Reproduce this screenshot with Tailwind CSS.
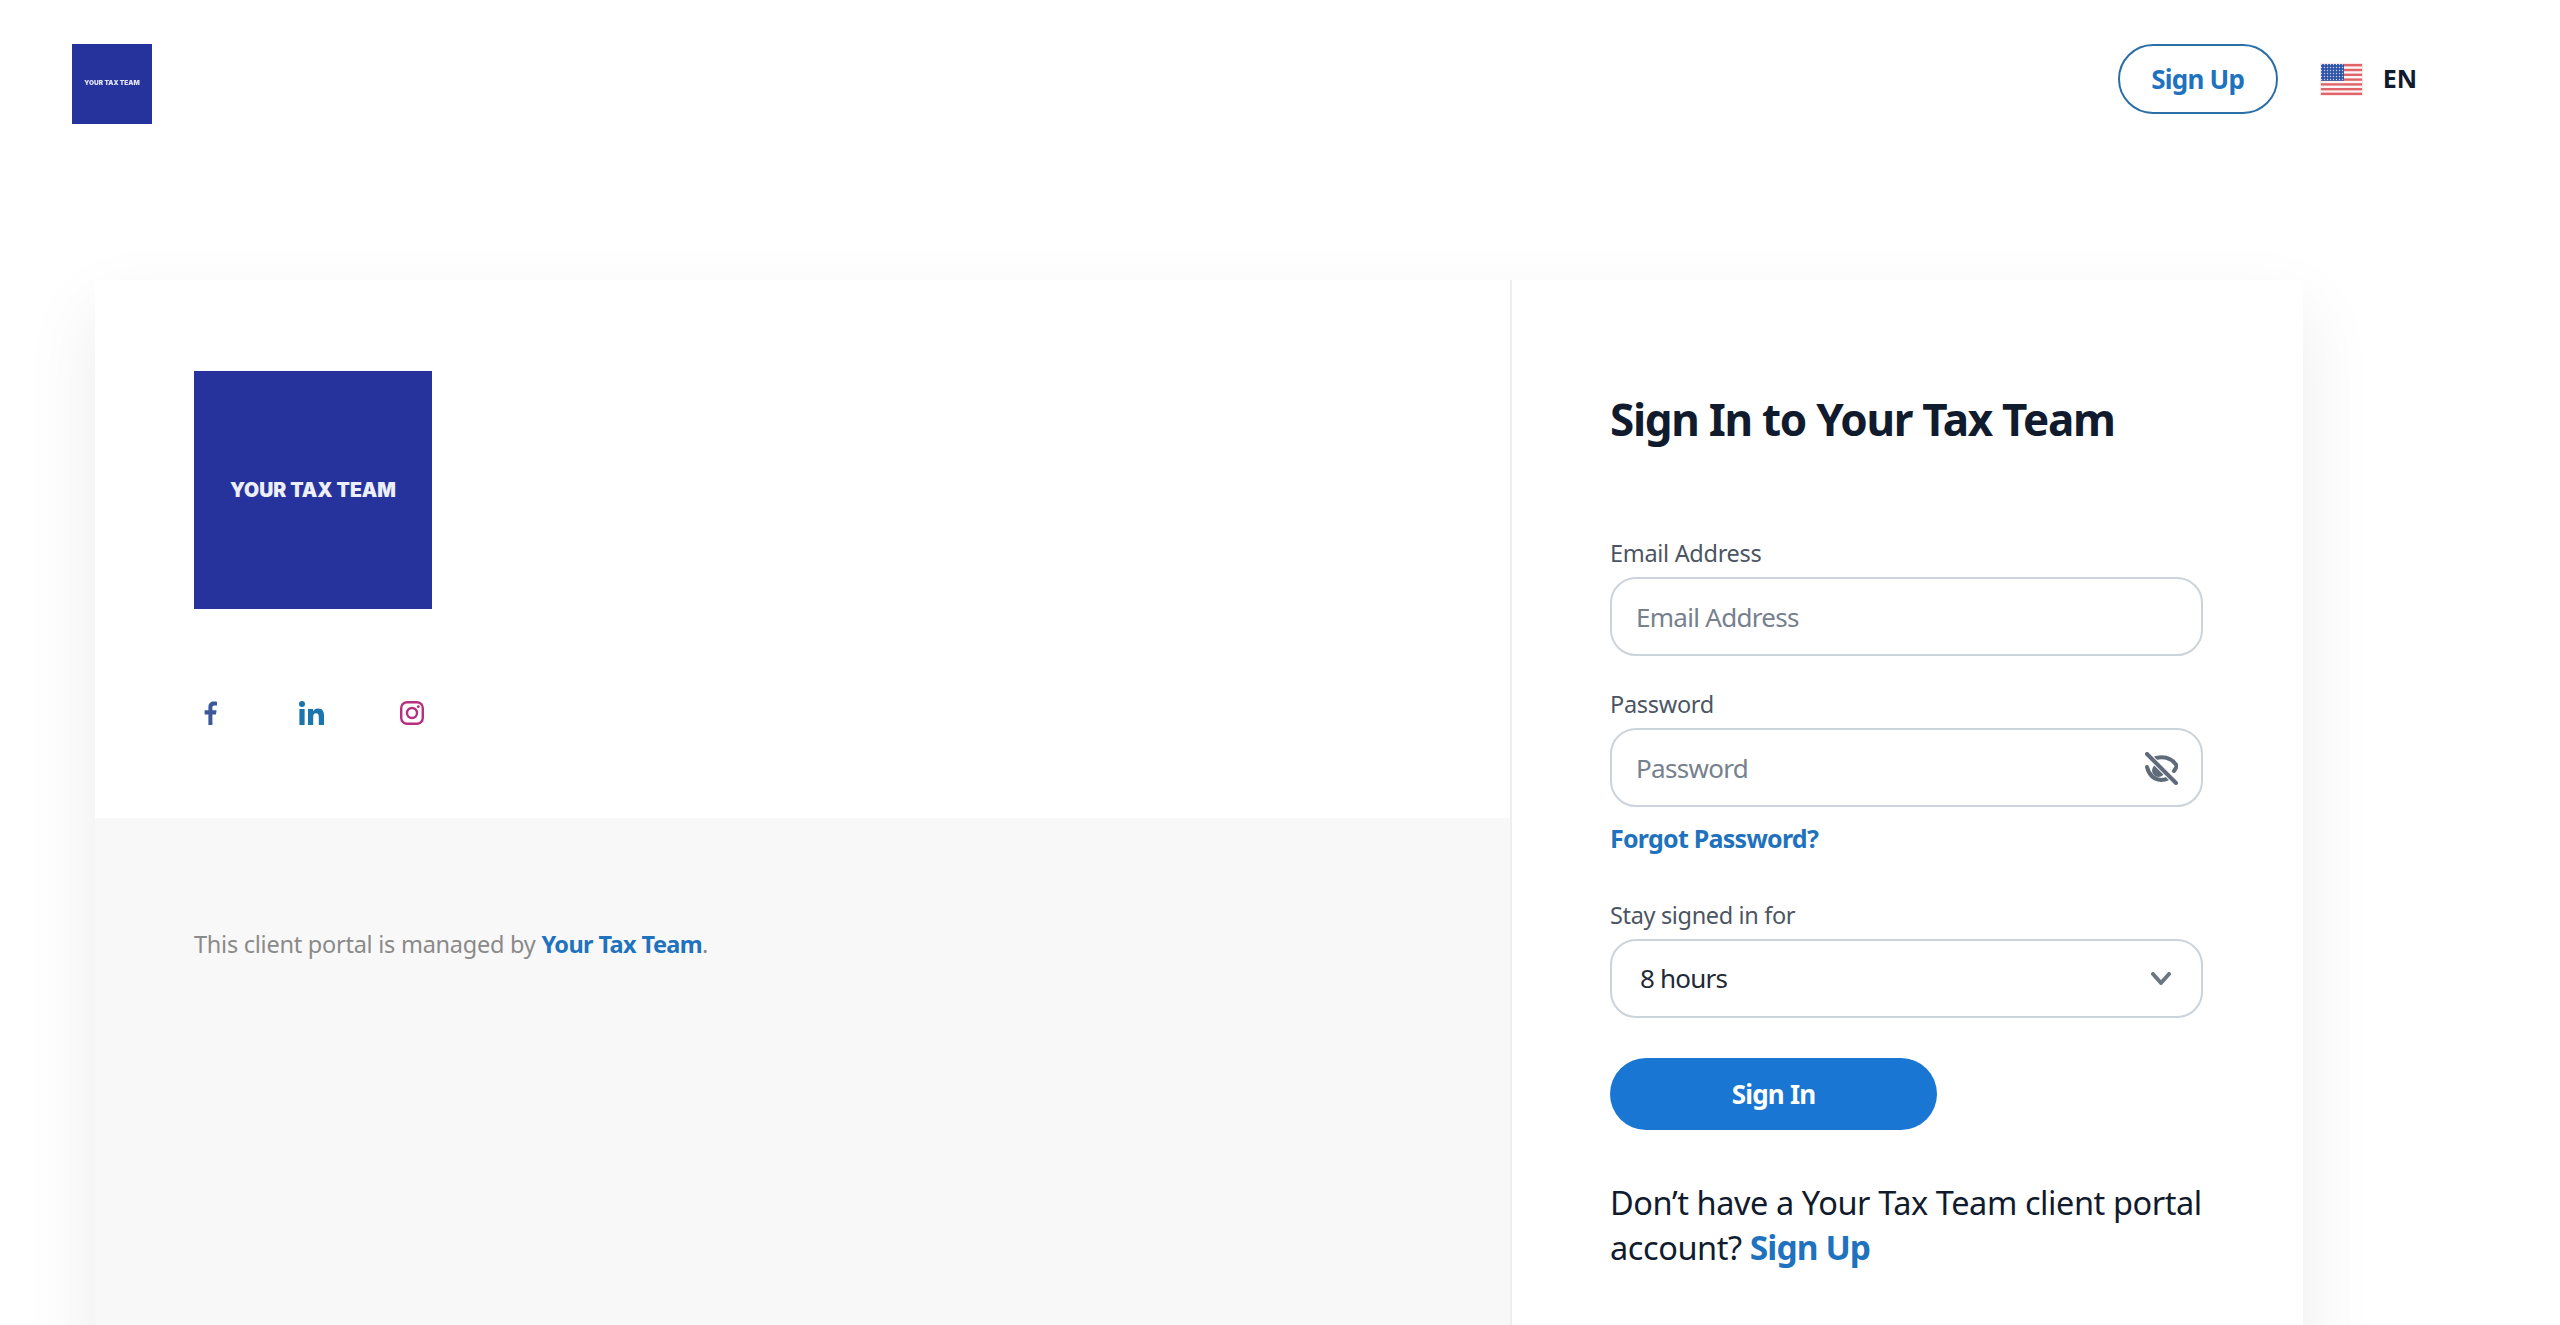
<!DOCTYPE html>
<html lang="en">
<head>
    <meta charset="UTF-8">
    <meta name="viewport" content="width=device-width, initial-scale=1.0">
    <title>Sign In - Your Tax Team</title>
    <script src="https://cdn.jsdelivr.net/npm/@tailwindcss/browser@4"></script>
</head>
<body class="bg-white font-['Noto_Sans',sans-serif] h-screen overflow-hidden">
    <!-- Top bar -->
    <header class="h-[280px] flex justify-between items-start pt-[44px] pl-[72px] pr-[143px]">
        <div class="w-[80px] h-[80px] bg-[#26339c] flex items-center justify-center">
            <span class="text-[6.500px] font-black text-[#dfe3f5] font-['Inter',sans-serif] whitespace-nowrap blur-[0.4px]">YOUR TAX TEAM</span>
        </div>
        <div class="flex items-center">
            <a href="#" class="w-[160px] h-[70px] rounded-full border-2 border-[#2a6fa8] flex items-center justify-center text-[26px] font-bold tracking-[-0.8px] text-[#1f72bd]">Sign Up</a>
            <svg class="ml-[42px] w-[43px] h-[33px]" viewBox="0 0 43 33">
                <defs>
                    <pattern id="stars" width="3" height="3" patternUnits="userSpaceOnUse">
                        <circle cx="1.5" cy="1.5" r="0.7" fill="#c9d3ee"/>
                    </pattern>
                </defs>
                <rect width="43" height="33" fill="#fbe9e9"/>
                <rect x="1" y="1" width="41" height="31" fill="#fdf6f6"/>
                <rect x="1" y="1" width="41" height="2.4" fill="#e0646a"/>
                <rect x="1" y="5.8" width="41" height="2.4" fill="#e0646a"/>
                <rect x="1" y="10.6" width="41" height="2.4" fill="#e0646a"/>
                <rect x="1" y="15.4" width="41" height="2.4" fill="#e0646a"/>
                <rect x="1" y="20.2" width="41" height="2.4" fill="#e0646a"/>
                <rect x="1" y="25" width="41" height="2.4" fill="#e0646a"/>
                <rect x="1" y="29.6" width="41" height="2.4" fill="#e0646a"/>
                <rect x="1" y="1" width="23" height="16.8" fill="#3056a8"/>
                <rect x="1" y="1" width="23" height="16.8" fill="url(#stars)"/>
            </svg>
            <span class="ml-[20px] text-[25px] font-bold text-[#111b2e]">EN</span>
        </div>
    </header>

    <!-- Card -->
    <main class="ml-[95px] w-[2208px] h-[1100px] flex bg-white shadow-[0_30px_70px_rgba(0,0,0,0.08)]">
        <section class="w-[1415px] flex flex-col">
            <div class="h-[538px] pt-[91px] pl-[99px]">
                <div class="w-[238px] h-[238px] pt-[2px] bg-[#26339c] flex items-center justify-center">
                    <span class="text-[19.500px] font-black text-[#eceef8] font-['Inter',sans-serif] whitespace-nowrap">YOUR TAX TEAM</span>
                </div>
                <div class="mt-[92px] flex gap-[69px]">
                    <a href="#" class="w-[32px] h-[24px] flex justify-center">
                        <svg class="w-[13px] h-[24px]" viewBox="0 0 13 24"><path fill="#3b5998" d="M8.4 24V13.4h3.6l.6-4.2H8.4V6.5c0-1.2.4-2 2.1-2H13V.8C12.600.7 11.300.6 9.800.6 6.600.6 4.400 2.500 4.400 6v3.200H.6v4.200h3.800V24z"/></svg>
                    </a>
                    <a href="#" class="w-[32px] h-[24px] flex justify-center">
                        <svg class="w-[25px] h-[24px]" viewBox="0 0 25 24"><g fill="#1a75ac"><circle cx="3" cy="3" r="3"/><rect x="0.400" y="8" width="5.200" height="16"/><path d="M9 8h5v2.300c.9-1.500 2.700-2.700 5-2.700 4.500 0 6 2.800 6 7V24h-5.200v-7.800c0-2-.4-4-2.800-4-2.400 0-2.800 2-2.800 3.900V24H9z"/></g></svg>
                    </a>
                    <a href="#" class="w-[32px] h-[24px] flex justify-center">
                        <svg class="w-[24px] h-[24px]" viewBox="0 0 24 24" fill="none" stroke="#b5307e" stroke-width="2.400"><rect x="1.200" y="1.200" width="21.600" height="21.600" rx="6"/><circle cx="12" cy="12" r="5"/><circle cx="18.300" cy="5.700" r="1.400" fill="#b5307e" stroke="none"/></svg>
                    </a>
                </div>
            </div>
            <div class="flex-1 bg-[#f8f8f8] pt-[110px] pl-[99px]">
                <p class="text-[23.500px] leading-[32px] tracking-[-0.25px] text-[#8a8a8a]">This client portal is managed by <a href="#" class="font-bold tracking-[-0.6px] text-[#1f72bd]">Your Tax Team</a>.</p>
            </div>
        </section>

        <section class="w-[793px] border-l-2 border-[#eeeeee] pl-[98px] pt-[111px]">
            <h1 class="text-[44px] leading-[56px] font-bold tracking-[-1.3px] text-[#111b2e]">Sign In to Your Tax Team</h1>
            <form class="w-[593px]">
                <label class="block mt-[90px] mb-[8px] text-[23.500px] leading-[32px] tracking-[-0.3px] text-[#4b5563]">Email Address</label>
                <input type="text" placeholder="Email Address" class="w-full h-[79px] px-[24px] rounded-[26px] border-2 border-[#cdd3da] text-[26px] tracking-[-0.7px] placeholder:text-[#76818d]">

                <label class="block mt-[32px] mb-[8px] text-[23.500px] leading-[32px] tracking-[-0.3px] text-[#4b5563]">Password</label>
                <div class="relative">
                    <input type="password" placeholder="Password" class="w-full h-[79px] px-[24px] rounded-[26px] border-2 border-[#cdd3da] text-[26px] tracking-[-0.7px] placeholder:text-[#76818d]">
                    <svg class="absolute right-[25px] top-[24px] w-[33px] h-[33px]" viewBox="0 0 33 33" fill="none" stroke="#5f6b7a" stroke-width="4" stroke-linecap="round">
                        <circle cx="13.500" cy="18.500" r="6.500" fill="#5f6b7a" stroke="none"/>
                        <path d="M11 6Q25 3 32 14L29 19"/>
                        <path d="M2 15Q5 27 16 28Q20 28 24 26"/>
                        <path d="M2 2L31 31" stroke="#ffffff" stroke-width="6"/>
                        <path d="M2 2L31 31"/>
                    </svg>
                </div>
                <a href="#" class="block mt-[15px] text-[25px] leading-[32px] font-bold tracking-[-0.75px] text-[#1f72bd]">Forgot Password?</a>

                <label class="block mt-[45px] mb-[8px] text-[23.500px] leading-[32px] tracking-[-0.35px] text-[#4b5563]">Stay signed in for</label>
                <div class="relative">
                    <select class="w-full h-[79px] px-[28px] rounded-[26px] border-2 border-[#cdd3da] bg-white text-[26px] tracking-[-0.8px] text-[#1f2937] appearance-none">
                        <option>8 hours</option>
                    </select>
                    <svg class="absolute right-[32px] top-[33px] w-[20px] h-[13px]" viewBox="0 0 20 13" fill="none" stroke="#6b7785" stroke-width="4" stroke-linecap="round" stroke-linejoin="round"><path d="M2 2l8 9 8-9"/></svg>
                </div>

                <button type="button" class="mt-[40px] block w-[327px] h-[72px] rounded-full bg-[#1976d2] text-white text-[26px] font-bold tracking-[-0.8px]">Sign In</button>

                <p class="mt-[50px] text-[32.500px] leading-[45px] tracking-[-0.42px] text-[#111b2e]">Don’t have a Your Tax Team client portal account? <a href="#" class="text-[33.500px] font-bold tracking-[-0.9px] text-[#1f72bd]">Sign Up</a></p>
            </form>
        </section>
    </main>
</body>
</html>
